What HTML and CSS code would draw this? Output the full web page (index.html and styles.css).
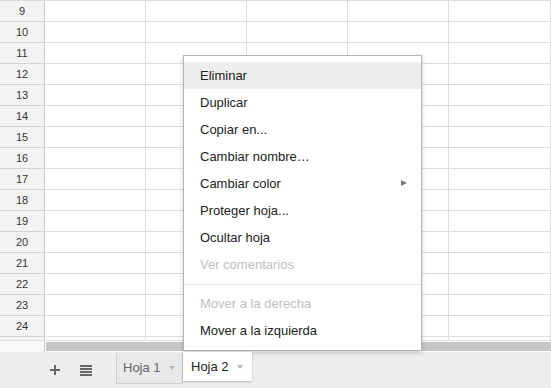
FILE: index.html
```html
<!DOCTYPE html>
<html lang="es">
<head>
<meta charset="utf-8">
<title>Hoja de cálculo</title>
<link rel="stylesheet" href="styles.css">
</head>
<body>
<div class="sheet">
  <div class="grid">
    <div class="row"><div class="rh">9</div><div class="c"></div><div class="c"></div><div class="c"></div><div class="c"></div><div class="c"></div></div>
    <div class="row"><div class="rh">10</div><div class="c"></div><div class="c"></div><div class="c"></div><div class="c"></div><div class="c"></div></div>
    <div class="row"><div class="rh">11</div><div class="c"></div><div class="c"></div><div class="c"></div><div class="c"></div><div class="c"></div></div>
    <div class="row"><div class="rh">12</div><div class="c"></div><div class="c"></div><div class="c"></div><div class="c"></div><div class="c"></div></div>
    <div class="row"><div class="rh">13</div><div class="c"></div><div class="c"></div><div class="c"></div><div class="c"></div><div class="c"></div></div>
    <div class="row"><div class="rh">14</div><div class="c"></div><div class="c"></div><div class="c"></div><div class="c"></div><div class="c"></div></div>
    <div class="row"><div class="rh">15</div><div class="c"></div><div class="c"></div><div class="c"></div><div class="c"></div><div class="c"></div></div>
    <div class="row"><div class="rh">16</div><div class="c"></div><div class="c"></div><div class="c"></div><div class="c"></div><div class="c"></div></div>
    <div class="row"><div class="rh">17</div><div class="c"></div><div class="c"></div><div class="c"></div><div class="c"></div><div class="c"></div></div>
    <div class="row"><div class="rh">18</div><div class="c"></div><div class="c"></div><div class="c"></div><div class="c"></div><div class="c"></div></div>
    <div class="row"><div class="rh">19</div><div class="c"></div><div class="c"></div><div class="c"></div><div class="c"></div><div class="c"></div></div>
    <div class="row"><div class="rh">20</div><div class="c"></div><div class="c"></div><div class="c"></div><div class="c"></div><div class="c"></div></div>
    <div class="row"><div class="rh">21</div><div class="c"></div><div class="c"></div><div class="c"></div><div class="c"></div><div class="c"></div></div>
    <div class="row"><div class="rh">22</div><div class="c"></div><div class="c"></div><div class="c"></div><div class="c"></div><div class="c"></div></div>
    <div class="row"><div class="rh">23</div><div class="c"></div><div class="c"></div><div class="c"></div><div class="c"></div><div class="c"></div></div>
    <div class="row"><div class="rh">24</div><div class="c"></div><div class="c"></div><div class="c"></div><div class="c"></div><div class="c"></div></div>
    <div class="row"><div class="rh"></div><div class="c"></div><div class="c"></div><div class="c"></div><div class="c"></div><div class="c"></div></div>
  </div>
  <div class="hscroll">
    <div class="corner"></div>
    <div class="thumb"></div>
  </div>
  <div class="tabbar">
    <svg class="ico-plus" width="10" height="10" viewBox="0 0 10 10"><rect x="0" y="4" width="10" height="2" fill="#666"/><rect x="4" y="0" width="2" height="10" fill="#666"/></svg>
    <svg class="ico-list" width="12" height="11" viewBox="0 0 12 11"><rect x="0" y="0" width="12" height="2" fill="#666"/><rect x="0" y="3" width="12" height="2" fill="#666"/><rect x="0" y="6" width="12" height="2" fill="#666"/><rect x="0" y="9" width="12" height="2" fill="#666"/></svg>
    <div class="tab">Hoja 1<span class="caret"></span></div>
    <div class="tab active">Hoja 2<span class="caret"></span></div>
  </div>
  <div class="menu">
    <div class="item hover">Eliminar</div>
    <div class="item">Duplicar</div>
    <div class="item">Copiar en...</div>
    <div class="item">Cambiar nombre…</div>
    <div class="item sub">Cambiar color<span class="arrow"></span></div>
    <div class="item">Proteger hoja...</div>
    <div class="item">Ocultar hoja</div>
    <div class="item disabled">Ver comentarios</div>
    <div class="sep"></div>
    <div class="item disabled">Mover a la derecha</div>
    <div class="item">Mover a la izquierda</div>
  </div>
</div>
</body>
</html>
```

FILE: styles.css
```css
* { box-sizing: border-box; }
html, body { margin: 0; padding: 0; }
body {
  width: 551px;
  height: 388px;
  overflow: hidden;
  background: #fff;
  font-family: "Liberation Sans", Arial, sans-serif;
  color: #222;
}
.sheet {
  position: relative;
  width: 551px;
  height: 388px;
  display: flex;
  flex-direction: column;
}
.grid {
  height: 341px;
  overflow: hidden;
  border-top: 1px solid #dcdcdc;
  border-bottom: 1px solid #e2e2e2;
  flex: none;
}
.row {
  display: grid;
  grid-template-columns: 45px repeat(4, 101px) 1fr;
  height: 21px;
}
.rh {
  background: #f3f3f3;
  border-right: 1px solid #c8c8c8;
  border-bottom: 1px solid #d4d4d4;
  font-size: 11px;
  color: #333;
  text-align: center;
  line-height: 20px;
}
.c {
  border-right: 1px solid #dcdcdc;
  border-bottom: 1px solid #dcdcdc;
}
.hscroll {
  height: 11px;
  display: flex;
  flex: none;
  background: #fff;
}
.corner {
  width: 45px;
  background: #f8f8f8;
  border-right: 1px solid #c8c8c8;
}
.thumb {
  flex: 1;
  margin: 1px 0 1px 1px;
  background: #c6c6c6;
}
.tabbar {
  flex: 1;
  background: #eeeeee;
  display: flex;
  align-items: flex-start;
  padding-left: 50px;
}
.ico-plus { margin-top: 13px; display: block; }
.ico-list { margin-top: 13px; margin-left: 20px; display: block; }
.tab {
  margin-top: 1px;
  margin-left: 24px;
  height: 31px;
  width: 67px;
  padding-left: 6px;
  border: 1px solid #cfcfcf;
  border-top: none;
  background: #e9e9e9;
  color: #666;
  font-size: 13px;
  line-height: 26px;
  display: flex;
  align-items: center;
  align-self: flex-start;
}
.tab .caret {
  margin-left: 8px;
  width: 0;
  height: 0;
  border-left: 3px solid transparent;
  border-right: 3px solid transparent;
  border-top: 4px solid #b5b5b5;
}
.tab.active {
  position: relative;
  z-index: 3;
  margin-left: 0;
  margin-top: 0;
  height: 29px;
  width: 69px;
  padding-left: 8px;
  padding-top: 1px;
  background: #fff;
  color: #222;
  border: none;
  box-shadow: 0 1px 2px rgba(0,0,0,.25);
}
.tab.active .caret { margin-left: 8px; }
.menu {
  position: absolute;
  left: 183px;
  top: 55px;
  width: 239px;
  z-index: 2;
  background: #fff;
  border: 1px solid #b4b4b4;
  box-shadow: 0 2px 4px rgba(0,0,0,.2);
  padding: 6px 0;
}
.item {
  height: 27px;
  line-height: 27px;
  padding-left: 16px;
  font-size: 13px;
  color: #222;
  position: relative;
}
.item.hover { background: #eeeeee; }
.item.disabled { color: #c0c0c0; }
.item .arrow {
  position: absolute;
  right: 14px;
  top: 10px;
  width: 0;
  height: 0;
  border-top: 3px solid transparent;
  border-bottom: 3px solid transparent;
  border-left: 6px solid #7a7a7a;
}
.sep {
  height: 1px;
  background: #e5e5e5;
  margin: 6px 0 5px;
}
```
